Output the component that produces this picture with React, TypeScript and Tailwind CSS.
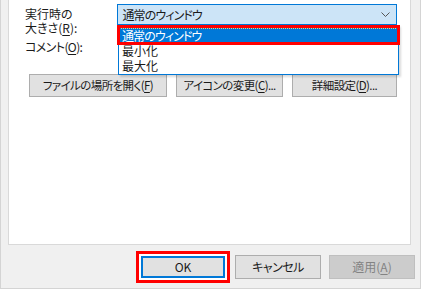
import React from "react";

const font = "font-['Noto_Sans_CJK_JP',sans-serif] [font-feature-settings:'palt']";

const Btn: React.FC<{ w: string; children: React.ReactNode }> = ({ w, children }) => (
  <div
    className={`${w} h-[23px] flex items-center justify-center bg-[#e1e1e1] border border-[#adadad] text-[11.5px] tracking-[-0.6px] text-[#1a1a1a]`}
  >
    {children}
  </div>
);

const App: React.FC = () => {
  return (
    <div className={`${font} w-[421px] h-[289px] bg-[#f0f0f0] border-l border-r border-b border-[#d4d4d4] pl-[7px] pr-[9px] flex flex-col overflow-hidden`}>
      <div className="relative h-[245px] bg-white border-l border-r border-b border-[#d9d9d9] pl-[16px] pr-[13px] pt-[4px]">
        <div className="flex h-[31px]">
          <div className="w-[93px] pt-[3px] text-[12px] text-[#1a1a1a]">
            <div className="h-[14px] leading-[14px]">実行時の</div>
            <div className="h-[14px] leading-[14px]">
              大きさ(<span className="underline underline-offset-2">R</span>):
            </div>
          </div>
          <div className="w-[281px] h-[21px] bg-[#cce4f7] border border-[#0078d7] flex items-center justify-between pl-[4px] pr-[6px] text-[12px] text-[#1a1a1a]">
            <span className="tracking-[-0.9px]">通常のウィンドウ</span>
            <svg width="9" height="6" viewBox="0 0 9 6">
              <path d="M0.5 0.5 L4.5 4.5 L8.5 0.5" fill="none" stroke="#555" strokeWidth="1" />
            </svg>
          </div>
        </div>
        <div className="mt-[5px] h-[14px] text-[12px] leading-[14px] tracking-[-0.6px] text-[#1a1a1a]">
          コメント(<span className="underline underline-offset-2">O</span>):
        </div>
        <div className="mt-[20px] flex gap-[9px] pl-[4px]">
          <Btn w="w-[138px]">
            ファイルの場所を開く(<span className="underline underline-offset-2">F</span>)
          </Btn>
          <Btn w="w-[107px]">
            アイコンの変更(<span className="underline underline-offset-2">C</span>)...
          </Btn>
          <Btn w="w-[105px]">
            詳細設定(<span className="underline underline-offset-2">D</span>)...
          </Btn>
        </div>

        {/* open dropdown list */}
        <div className="absolute left-[109px] top-[25px] w-[281px] h-[50px] pt-[3px] bg-white border border-[#0078d7] border-t-0 shadow-[2px_2px_2px_rgba(0,0,0,0.15)] text-[12px] leading-[15px] text-[#1a1a1a]">
          <div className="h-[15px] bg-[#0078d7] text-white pl-[3px] tracking-[-0.9px] outline outline-1 outline-dotted outline-offset-[-1px] outline-[#f5d06b]">
            通常のウィンドウ
          </div>
          <div className="h-[15px] pl-[3px]">最小化</div>
          <div className="h-[15px] pl-[3px]">最大化</div>
          <div className="absolute left-[-2px] right-[-2px] top-0 h-[20px] border-[3px] border-[#ff0000]" />
        </div>
      </div>

      <div className="flex justify-end items-center gap-[5px] mt-[6px]">
        <div className="border-[3px] border-[#ff0000] p-[2px] bg-white">
          <div className="w-[84px] h-[22px] flex items-center justify-center bg-[#e1e1e1] border-2 border-[#0078d7] text-[12px] text-[#1a1a1a]">
            OK
          </div>
        </div>
        <div className="w-[86px] h-[24px] flex items-center justify-center bg-[#e1e1e1] border border-[#adadad] text-[12px] tracking-[-0.5px] text-[#1a1a1a]">
          キャンセル
        </div>
        <div className="ml-[3px] mr-[-4px] w-[86px] h-[24px] flex items-center justify-center bg-[#cccccc] border border-[#bfbfbf] text-[12px] text-[#838383]">
          適用(<span className="underline underline-offset-2">A</span>)
        </div>
      </div>
    </div>
  );
};

export default App;
